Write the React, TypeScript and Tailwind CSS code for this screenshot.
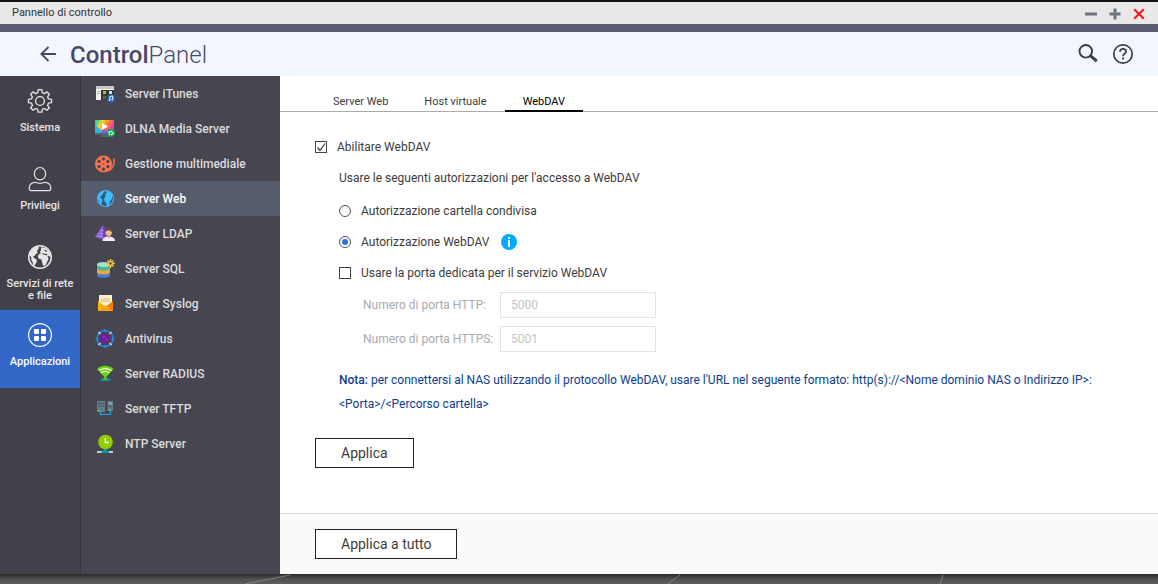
import { useState, type ReactNode } from 'react';
import { clsx } from 'clsx';

/* ---------- rail icons ---------- */

const GearIcon = () => (
  <svg width="26" height="26" viewBox="0 0 26 26" fill="none" stroke="currentColor" strokeWidth="1.3" strokeLinejoin="round">
    <path d="M11.2 1.7h3.6l.5 3 2.1.9 2.5-1.8 2.500 2.500-1.800 2.500.9 2.100 3 .4v3.400l-3 .5-.9 2.100 1.800 2.500-2.500 2.500-2.500-1.800-2.100.9-.5 2.800h-3.600l-.5-2.800-2.100-.9-2.500 1.800-2.500-2.500 1.800-2.500-.9-2.100-3-.5v-3.400l3-.4.9-2.100-1.800-2.500 2.500-2.500 2.500 1.800 2.100-.9z" />
    <circle cx="13" cy="13" r="4.4" />
  </svg>
);

const UserIcon = () => (
  <svg width="26" height="26" viewBox="0 0 26 26" fill="none" stroke="currentColor" strokeWidth="1.2" strokeLinejoin="round">
    <ellipse cx="13" cy="7.7" rx="5.7" ry="6.2" />
    <path d="M8.2 16.3c1.5 0 2.5 1 4.8 1s3.3-1 4.8-1c3 0 6 2 6 5.6 0 1.8-.6 2.8-2 2.8H4.2c-1.4 0-2-1-2-2.8 0-3.6 3-5.6 6-5.6z" />
  </svg>
);

const GlobeIcon = () => (
  <svg width="26" height="26" viewBox="0 0 26 26" fill="none">
    <circle cx="13" cy="13" r="11.3" stroke="currentColor" strokeWidth="1.5" />
    <path
      fill="currentColor"
      d="M2.2 11C3 7 6 4 9.500 2.800L12 3.200l-.8 2.300-1.500 1.400 1.300 1.500-2 1.500-1.600 2-1.600.8 2.200 1.800 2 1.500-.6 2.700-1.600 2-.4 2-1-.6-.8-3.800-1.400-2.500.2-2.200zM14 3.200l4.500.8 3.500 3.300 1.800 4.500-.5 1.500-1.700-1.500-1 .4 1 2.800-1.600 3-1 2.500-2 1.500-1-.5-1-3.500-.4-2.500-2.900-.7-1-2.500 1.600-2.400 1.600-.6-1.100-1.700 1.200-1.200z"
    />
    <path d="M15.500 9.700l4.700 1.200M17.500 6.200l2.300 1.300" stroke="#42414a" strokeWidth="1.100" />
  </svg>
);

const AppsIcon = () => (
  <svg width="26" height="26" viewBox="0 0 26 26" fill="none">
    <circle cx="13" cy="13" r="11.4" stroke="currentColor" strokeWidth="1.2" />
    <g fill="currentColor">
      <rect x="7" y="7" width="5" height="5" rx="1" />
      <rect x="14" y="7" width="5" height="5" rx="1" />
      <rect x="7" y="14" width="5" height="5" rx="1" />
      <rect x="14" y="14" width="5" height="5" rx="1" />
    </g>
  </svg>
);

/* ---------- application icons ---------- */

const ItunesIcon = () => (
  <svg width="20" height="20" viewBox="0 0 20 20">
    <path fill="#f3f3ee" d="M1 2h18v14H1z" />
    <path fill="#c9c9c9" d="M1 2h18v3H1z" />
    <path fill="#35383c" d="M6 6h13v10H6z" />
    <path fill="#b0b4b6" d="M2 7h3v1H2zM2 9h3v1H2z" />
    <path fill="#b4bd2c" d="M8 7h3v3H8z" />
    <path fill="#dcdcdc" d="M14 7h3v3h-3z" />
    <path fill="#5d6a3c" d="M8 12h3v3H8z" />
    <circle cx="16" cy="14.500" r="4" fill="#1565c8" />
    <path d="M14.900 16.200v-3.700l2.800-.6v3.700" fill="none" stroke="#fff" strokeWidth="1" />
    <circle cx="14.400" cy="16.300" r=".8" fill="#fff" />
    <circle cx="17.200" cy="15.700" r=".8" fill="#fff" />
  </svg>
);

const DlnaIcon = () => (
  <svg width="20" height="20" viewBox="0 0 20 20">
    <defs>
      <linearGradient id="dlna" x1="0" y1=".3" x2="1" y2=".7">
        <stop offset="0" stopColor="#2fd0a0" />
        <stop offset=".25" stopColor="#f2d81f" />
        <stop offset=".55" stopColor="#f98a2c" />
        <stop offset=".8" stopColor="#f04a9a" />
        <stop offset="1" stopColor="#c03ce0" />
      </linearGradient>
    </defs>
    <path fill="#59656b" d="M0 1h19v15H0zM7 16h5v1h2v1H5v-1h2z" />
    <path fill="url(#dlna)" d="M0 1h19v13H0z" />
    <path fill="#2fb7e8" d="M0 5l8 9H0z" />
    <path fill="#8a5be0" d="M8 9l6 5H6z" />
    <path fill="#fff" d="M7 4l6 3.500L7 11z" />
    <circle cx="16" cy="14" r="4" fill="#12a558" />
    <g fill="#e8fff0">
      <circle cx="14.300" cy="13" r=".9" />
      <circle cx="16.500" cy="12.500" r=".9" />
      <circle cx="18" cy="14.200" r=".9" />
      <circle cx="14.500" cy="15.300" r=".9" />
      <circle cx="16.700" cy="15.600" r=".9" />
    </g>
  </svg>
);

const ReelIcon = () => (
  <svg width="20" height="20" viewBox="0 0 20 20">
    <path d="M19.200 4.500c0 6-.8 10-6.500 12.700" fill="none" stroke="#f4683f" strokeWidth="1.800" />
    <circle cx="8.500" cy="10" r="8.500" fill="#f9724a" />
    <g fill="#474650">
      <circle cx="8.500" cy="4.800" r="1.600" />
      <circle cx="12.900" cy="7.400" r="1.600" />
      <circle cx="12.900" cy="12.600" r="1.600" />
      <circle cx="8.500" cy="15.200" r="1.600" />
      <circle cx="4.100" cy="12.600" r="1.600" />
      <circle cx="4.100" cy="7.400" r="1.600" />
      <circle cx="8.500" cy="10" r=".8" />
    </g>
  </svg>
);

const WebIcon = () => (
  <svg width="20" height="20" viewBox="0 0 20 20">
    <circle cx="10.500" cy="9.500" r="8" fill="#2d5a7a" stroke="#3fb4f5" strokeWidth="1.200" />
    <path
      fill="#3fbcfd"
      d="M2.500 9C3 5 5.500 2.300 9 1.500l1 1.300-2 1.400-.3 1.600-2 1.400-.5 1.500 2 1.500.3 2.500-1 1.300.2 2.200-1.700-1.400L4 11.500zM11 1.600c3.500 0 6.300 2.400 7.300 5.500l-1.100.7-.8 3-1.900 1.700.5 2.500-1.500 2.400-1.700-.4-.6-3-1.700-1.700-.4-2.500 1.400-2.300-.5-2 1.700-1.300z"
    />
  </svg>
);

const LdapIcon = () => (
  <svg width="20" height="20" viewBox="0 0 20 20">
    <path fill="#6b42b8" d="M8 1l8 13-5 2-11-3z" />
    <path fill="#8a62d2" d="M8 1L0 13l8 2.500z" />
    <path d="M5.500 6l3 .8M3.800 9l4.600 1M2 11.700l6.300 1.300" stroke="#c7b2ee" strokeWidth=".7" />
    <path fill="#eef0f3" d="M7.500 17c0-3 2-4.500 6-4.500s6.500 1.500 6.500 4.500z" />
    <circle cx="13.700" cy="8.500" r="3.200" fill="#efc08d" />
    <path fill="#6d4b33" d="M10.300 8c-.3-3 1.500-4 3.500-4s3.600 1.200 3.200 4c-1-.2-1.500-1.500-3-1.500s-2.500.5-3.700 1.500z" />
    <path fill="#e0a972" d="M12.500 11h2.500l-.5 3h-1.500z" />
  </svg>
);

const SqlIcon = () => (
  <svg width="20" height="20" viewBox="0 0 20 20">
    <path fill="#4a7fd0" d="M2 12.500h13v4c0 1.300-3 2.300-6.500 2.300S2 17.800 2 16.500z" />
    <path fill="#f2a93a" d="M2 9h13v4c0 1.300-3 2.300-6.500 2.300S2 14.300 2 13z" />
    <path fill="#4fb394" d="M2 5.500h13v4c0 1.300-3 2.300-6.500 2.300S2 10.800 2 9.500z" />
    <ellipse cx="8.500" cy="5.500" rx="6.500" ry="2.500" fill="#a5e3cd" />
    <path d="M15.500 0v9M11 4.500h9M12.500 1.500l6 6M18.500 1.500l-6 6" stroke="#f7c54a" strokeWidth="1.500" />
    <circle cx="15.500" cy="4.500" r="1.700" fill="#474650" stroke="#f7c54a" />
  </svg>
);

const SyslogIcon = () => (
  <svg width="20" height="20" viewBox="0 0 20 20">
    <path fill="#fdf1cf" d="M4 1h13v12H4z" />
    <text x="10.500" y="7.500" fontFamily="Roboto, sans-serif" fontSize="5" fontWeight="700" textAnchor="middle" fill="#f0b050">LOG</text>
    <path fill="#ffb300" d="M3 7l7.500 6L3 17z" />
    <path fill="#f57c00" d="M18 7l-7.500 6 7.500 4z" />
    <path fill="#ffa112" d="M3 17l7.500-6 7.500 6z" />
  </svg>
);

const AntivirusIcon = () => (
  <svg width="20" height="20" viewBox="0 0 20 20">
    <circle cx="10" cy="9.500" r="8" fill="none" stroke="#2b86e6" strokeWidth="1.500" />
    <path d="M10 0v3M10 16v3M.5 9.500h3M16.500 9.500h3" stroke="#2b86e6" strokeWidth="1.500" />
    <path d="M3.500 3l2 2M16.500 3l-2 2M3.500 16l2-2M16.500 16l-2-2" stroke="#dbe8f7" strokeWidth="1.300" />
    <circle cx="10" cy="9.500" r="4.700" fill="#6f1da3" />
    <path d="M5 7l10 5M5 12l10-5M10 4.500v10" stroke="#6f1da3" strokeWidth="1.400" />
    <circle cx="8.700" cy="8.100" r="1.300" fill="#8f34c4" />
    <circle cx="11.800" cy="10.500" r="1" fill="#9a3fd0" />
  </svg>
);

const RadiusIcon = () => (
  <svg width="20" height="20" viewBox="0 0 20 20">
    <path fill="#67d512" d="M2 5C6.500.7 14 .7 18.500 5l-8.200 9z" />
    <path d="M4 6.500c3.500-2.600 9-2.600 12.500 0M6 9c2.500-1.800 6-1.800 8.500 0" fill="none" stroke="#f2ffe2" strokeWidth="1.200" />
    <path fill="#0f8f9c" d="M6 14.500h9l1 2.500H5z" />
    <path fill="#67d512" d="M9.300 11h2v3.500h1.200v1h-4.400v-1h1.200z" />
  </svg>
);

const TftpIcon = () => (
  <svg width="20" height="20" viewBox="0 0 20 20">
    <path fill="#607d8b" d="M2 2h8v11H2zM12.500 2H18v10h-5.500z" />
    <path fill="#455a64" d="M3 4h6v1H3zM3 6.500h6v1H3zM13.500 7h3.500v1h-3.500z" />
    <path fill="#90a4ae" d="M13.500 3.500H17v2h-3.500z" />
    <path fill="#7ed321" d="M3 11h1.500v1.500H3zM14 10h1.500v1.500H14z" />
    <path d="M5.500 13v2.500h10V12" fill="none" stroke="#29a3e8" strokeWidth="1.200" />
  </svg>
);

const NtpIcon = () => (
  <svg width="20" height="20" viewBox="0 0 20 20">
    <path fill="#c7c9cc" d="M2 17h5v2H2zM13 17h5v2h-5z" />
    <path fill="#0f95a3" d="M9 15h2.500v1.500H14V19H6.500v-2.500H9z" />
    <circle cx="10.500" cy="8" r="7.300" fill="#93cc00" />
    <path d="M10.300 4v4.500h3.400" fill="none" stroke="#fff" strokeWidth="1.400" />
  </svg>
);

/* ---------- data ---------- */

const sections = [
  { name: 'Sistema', icon: <GearIcon /> },
  { name: 'Privilegi', icon: <UserIcon /> },
  { name: 'Servizi di rete e file', icon: <GlobeIcon /> },
  { name: 'Applicazioni', icon: <AppsIcon /> },
];

const apps = [
  { name: 'Server iTunes', icon: <ItunesIcon /> },
  { name: 'DLNA Media Server', icon: <DlnaIcon /> },
  { name: 'Gestione multimediale', icon: <ReelIcon /> },
  { name: 'Server Web', icon: <WebIcon /> },
  { name: 'Server LDAP', icon: <LdapIcon /> },
  { name: 'Server SQL', icon: <SqlIcon /> },
  { name: 'Server Syslog', icon: <SyslogIcon /> },
  { name: 'Antivirus', icon: <AntivirusIcon /> },
  { name: 'Server RADIUS', icon: <RadiusIcon /> },
  { name: 'Server TFTP', icon: <TftpIcon /> },
  { name: 'NTP Server', icon: <NtpIcon /> },
];

const tabs = ['Server Web', 'Host virtuale', 'WebDAV'];

/* ---------- form controls ---------- */

type CheckProps = {
  checked: boolean;
  onChange: (checked: boolean) => void;
  children: ReactNode;
};

const Checkbox = ({ checked, onChange, children }: CheckProps) => (
  <label className="flex items-center">
    <span className="grid">
      <input
        type="checkbox"
        checked={checked}
        onChange={(e) => onChange(e.target.checked)}
        className="col-start-1 row-start-1 h-3 w-3 appearance-none border border-[#444] bg-white"
      />
      {checked && (
        <svg width="12" height="12" viewBox="0 0 12 12" className="pointer-events-none col-start-1 row-start-1">
          <path d="M2.500 6.500L5 9.500 10 2.500" fill="none" stroke="#333" strokeWidth="1.200" />
        </svg>
      )}
    </span>
    <span className="pl-2.5">{children}</span>
  </label>
);

const Radio = ({ checked, onChange, children }: CheckProps) => (
  <label className="flex items-center">
    <span className="grid place-items-center">
      <input
        type="radio"
        name="auth"
        checked={checked}
        onChange={() => onChange(true)}
        className="col-start-1 row-start-1 h-3 w-3 appearance-none rounded-full border border-[#555] bg-linear-to-b from-[#f2f2f2] to-white"
      />
      {checked && <span className="pointer-events-none col-start-1 row-start-1 h-1.5 w-1.5 rounded-full bg-[#2f6fde]" />}
    </span>
    <span className="pl-2.5">{children}</span>
  </label>
);

const PortField = ({ id, label, value }: { id: string; label: string; value: string }) => (
  <div className="flex items-center">
    <label htmlFor={id} className="w-[137px] text-[#aaa]">
      {label}
    </label>
    <input
      id={id}
      type="text"
      disabled
      defaultValue={value}
      className="h-[26px] w-[156px] border border-[#e3e3e3] bg-white px-2.5 text-[#c4c4c4]"
    />
  </div>
);

/* ---------- page ---------- */

export default function App() {
  const [section, setSection] = useState('Applicazioni');
  const [app, setApp] = useState('Server Web');
  const [tab, setTab] = useState('WebDAV');
  const [enabled, setEnabled] = useState(true);
  const [auth, setAuth] = useState('webdav');
  const [dedicated, setDedicated] = useState(false);

  return (
    <div className="flex min-h-screen flex-col bg-[#111] pt-0.5 font-[Roboto,sans-serif] text-[12px] text-[#3c3c3c]">
      <div className="flex h-[22px] items-center justify-between bg-[#e8e8e8] pt-px pr-[13px] pl-3">
        <span className="text-[11px] text-[#333]">Pannello di controllo</span>
        <div className="flex items-center gap-3">
          <button aria-label="Riduci a icona">
            <svg width="12" height="12" viewBox="0 0 12 12">
              <path d="M0 6h12" stroke="#6c747d" strokeWidth="3" />
            </svg>
          </button>
          <button aria-label="Ingrandisci">
            <svg width="12" height="12" viewBox="0 0 12 12">
              <path d="M.5 6h11M6 .5v11" stroke="#6c747d" strokeWidth="3" />
            </svg>
          </button>
          <button aria-label="Chiudi">
            <svg width="12" height="12" viewBox="0 0 12 12">
              <path d="M1.200 1.200l9.600 9.600M10.800 1.200l-9.600 9.600" stroke="#f01f1f" strokeWidth="2.200" />
            </svg>
          </button>
        </div>
      </div>

      <header className="flex h-[52px] items-center justify-between border-t-8 border-[#5a5b72] bg-[#f2f7ff] pr-6 pl-10">
        <div className="flex items-center">
          <button aria-label="Indietro" className="text-[#4a4868]">
            <svg width="16" height="16" viewBox="0 0 16 16" fill="none" stroke="currentColor" strokeWidth="1.800">
              <path d="M16 8H1.500M8.500 1L1.300 8l7.200 7" />
            </svg>
          </button>
          <h1 className="pt-0.5 pl-3.5 text-[24px] font-light text-[#4a4868]">
            <b className="font-medium">Control</b>Panel
          </h1>
        </div>
        <div className="flex items-center gap-3.5 text-[#3d3d42]">
          <button aria-label="Cerca">
            <svg width="20" height="20" viewBox="0 0 20 20" fill="none" stroke="currentColor">
              <circle cx="7.800" cy="7.300" r="6.300" strokeWidth="1.900" />
              <path d="M12.500 11.800l6.300 5.300" strokeWidth="3" />
            </svg>
          </button>
          <button aria-label="Guida">
            <svg width="22" height="22" viewBox="0 0 22 22" fill="none" stroke="currentColor">
              <circle cx="11" cy="11" r="9.200" strokeWidth="1.700" />
              <path d="M8 8.800c0-1.900 1.200-3 3-3s3 1 3 2.700c0 2-2.900 2.300-2.900 4.700" strokeWidth="1.800" />
              <path d="M11.100 14.500v2" strokeWidth="1.900" />
            </svg>
          </button>
        </div>
      </header>

      <div className="flex flex-1">
        <nav className="w-[81px] shrink-0 border-r border-[#38383c] bg-[#42414a] text-[#e6e6e6]">
          {sections.map((s) => (
            <button
              key={s.name}
              onClick={() => setSection(s.name)}
              className={clsx(
                'flex h-[78px] w-full flex-col items-center gap-2 px-1 pt-3 text-[11px] leading-3 font-medium',
                section === s.name && 'bg-[#3367c8] text-white',
              )}
            >
              {s.icon}
              {s.name}
            </button>
          ))}
        </nav>

        <nav className="w-[199px] shrink-0 bg-[#474650]">
          {apps.map((a) => (
            <button
              key={a.name}
              onClick={() => setApp(a.name)}
              className={clsx(
                'flex h-[35px] w-full items-center gap-2.5 pl-3.5 text-left font-medium',
                app === a.name ? 'bg-[#555d6c] text-white' : 'text-[#dcdcdc]',
              )}
            >
              {a.icon}
              {a.name}
            </button>
          ))}
        </nav>

        <main className="flex min-w-0 flex-1 flex-col bg-white">
          <div className="flex h-9 items-end border-b border-[#aaa] pl-[35px] text-[11px]">
            {tabs.map((t) => (
              <button
                key={t}
                onClick={() => setTab(t)}
                className={clsx(
                  '-mb-px border-b-2 px-[18px] leading-4',
                  tab === t ? 'border-black text-black' : 'border-transparent',
                )}
              >
                {t}
              </button>
            ))}
          </div>

          <div className="flex-1 px-[35px] pt-[19px]">
            <div className="flex h-[31px] items-center">
              <Checkbox checked={enabled} onChange={setEnabled}>Abilitare WebDAV</Checkbox>
            </div>

            <div className="pl-6">
              <p className="flex h-[31px] items-center">Usare le seguenti autorizzazioni per l'accesso a WebDAV</p>
              <div className="pt-0.5">
                <div className="flex h-[31px] items-center">
                  <Radio checked={auth === 'shared'} onChange={() => setAuth('shared')}>
                    Autorizzazione cartella condivisa
                  </Radio>
                </div>
                <div className="flex h-[31px] items-center gap-3">
                  <Radio checked={auth === 'webdav'} onChange={() => setAuth('webdav')}>
                    Autorizzazione WebDAV
                  </Radio>
                  <button aria-label="Informazioni">
                    <svg width="16" height="16" viewBox="0 0 16 16">
                      <circle cx="8" cy="8" r="8" fill="#00aaff" />
                      <path d="M7 3h2v2H7zM7 6h2v7H7z" fill="#fff" />
                    </svg>
                  </button>
                </div>
              </div>
              <div className="flex h-8 items-center">
                <Checkbox checked={dedicated} onChange={setDedicated}>
                  Usare la porta dedicata per il servizio WebDAV
                </Checkbox>
              </div>

              <div className="flex flex-col gap-2 pt-[3px] pl-6">
                <PortField id="http-port" label="Numero di porta HTTP:" value="5000" />
                <PortField id="https-port" label="Numero di porta HTTPS:" value="5001" />
              </div>

              <p className="pt-4 leading-6 text-[#0b3d91]">
                <b className="font-medium">Nota:</b> per connettersi al NAS utilizzando il protocollo WebDAV, usare l'URL
                nel seguente formato: http(s)://&lt;Nome dominio NAS o Indirizzo IP&gt;:&lt;Porta&gt;/&lt;Percorso cartella&gt;
              </p>
            </div>

            <button className="mt-[22px] h-[30px] border border-[#222] bg-white px-[25px] text-[14px]">Applica</button>
          </div>

          <footer className="border-t border-[#d8d8d8] bg-[#fafafa] px-[35px] py-[15px]">
            <button className="block h-[30px] border border-[#222] bg-white px-[25px] text-[14px]">Applica a tutto</button>
          </footer>
        </main>
      </div>

      <div className="h-2.5 bg-linear-to-b from-[#2b2b2b] via-[#505050] to-[#5e5e5e]">
        <svg width="100%" height="10" stroke="#a0a0a0" strokeWidth="1" opacity=".6">
          <path d="M245 10L290 1M668 10L680 1M940 10L943 1" />
        </svg>
      </div>
    </div>
  );
}
